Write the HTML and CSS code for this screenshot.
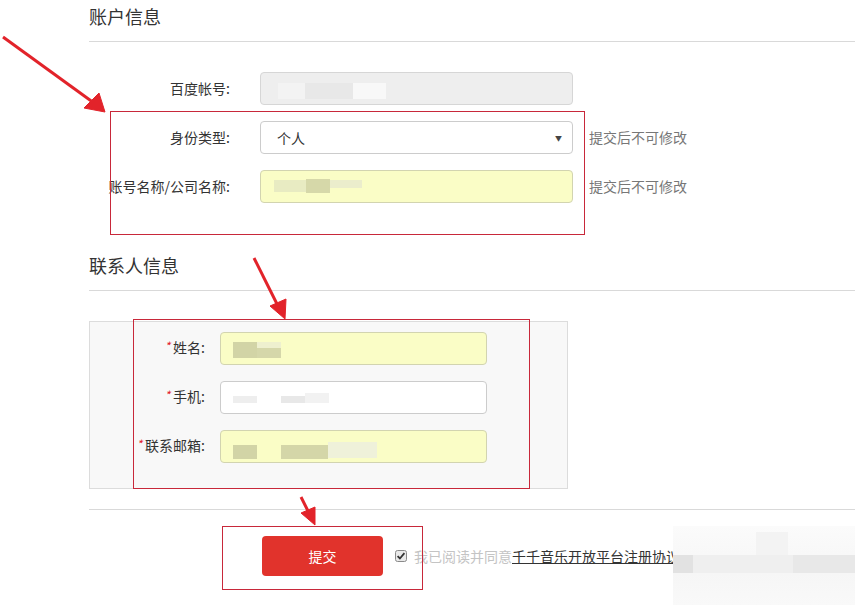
FILE: index.html
```html
<!DOCTYPE html>
<html lang="zh-CN">
<head>
<meta charset="utf-8">
<title>账户信息</title>
<link rel="stylesheet" href="styles.css">
</head>
<body>
<div class="page">
  <section class="sec sec-account">
    <h2 class="sec-title">账户信息</h2>
    <div class="form">
      <div class="row">
        <span class="lbl">百度帐号:</span>
        <div class="field field-disabled">
          <span class="mz mz-a1"></span><span class="mz mz-a2"></span><span class="mz mz-a3"></span>
        </div>
      </div>
      <div class="row">
        <span class="lbl">身份类型:</span>
        <div class="field field-select"><span class="sel-text">个人</span><span class="sel-arrow">▼</span></div>
        <span class="hint">提交后不可修改</span>
      </div>
      <div class="row">
        <span class="lbl">账号名称/公司名称:</span>
        <div class="field field-auto">
          <span class="mz mz-b1"></span><span class="mz mz-b2"></span><span class="mz mz-b3"></span>
        </div>
        <span class="hint">提交后不可修改</span>
      </div>
    </div>
  </section>

  <section class="sec sec-contact">
    <h2 class="sec-title">联系人信息</h2>
    <div class="panel">
      <div class="prow">
        <span class="plbl"><i class="req">*</i>姓名:</span>
        <div class="field pfield field-auto">
          <span class="mz mz-c1"></span><span class="mz mz-c2"></span><span class="mz mz-c3"></span>
        </div>
      </div>
      <div class="prow">
        <span class="plbl"><i class="req">*</i>手机:</span>
        <div class="field pfield">
          <span class="mz mz-d1"></span><span class="mz mz-d2"></span><span class="mz mz-d3"></span>
        </div>
      </div>
      <div class="prow">
        <span class="plbl"><i class="req">*</i>联系邮箱:</span>
        <div class="field pfield field-auto">
          <span class="mz mz-e1"></span><span class="mz mz-e2"></span><span class="mz mz-e3"></span>
        </div>
      </div>
    </div>
  </section>

  <div class="divider"></div>

  <div class="submit-row">
    <button class="btn-submit">提交</button>
    <span class="check">
      <svg width="12" height="12" viewBox="0 0 12 12"><rect x="0.5" y="0.5" width="11" height="11" rx="2" fill="#e9e9e9" stroke="#8a8a8a"/><path d="M2.6 6.2 L4.9 8.5 L9.4 3.2" fill="none" stroke="#333" stroke-width="1.8"/></svg>
    </span>
    <span class="agree">我已阅读并同意</span><a class="agree-link">千千音乐开放平台注册协议</a>
  </div>
</div>

<div class="blur-mask">
  <span class="bm bm1"></span><span class="bm bm2"></span><span class="bm bm3"></span><span class="bm bm4"></span>
</div>

<div class="anno anno-1"></div>
<div class="anno anno-2"></div>
<div class="anno anno-3"></div>

<svg class="arrows" width="855" height="605" viewBox="0 0 855 605">
  <g fill="#e2232a" stroke="#e2232a" stroke-linejoin="round">
    <line x1="3" y1="37" x2="94" y2="103" stroke-width="3"/>
    <polygon points="105,112 84,108 99,93" stroke-width="1"/>
    <line x1="254" y1="258" x2="278" y2="306" stroke-width="3"/>
    <polygon points="285,319 270,306 286,299" stroke-width="1"/>
    <line x1="301" y1="497" x2="309" y2="513" stroke-width="3"/>
    <polygon points="315,525 301,513 315,507" stroke-width="1"/>
  </g>
</svg>
</body>
</html>
```

FILE: styles.css
```css
html, body {
  margin: 0;
  padding: 0;
  background: #fff;
}
body {
  width: 855px;
  height: 605px;
  overflow: hidden;
  position: relative;
  font-family: "Noto Sans CJK SC", "Liberation Sans", sans-serif;
  font-size: 14px;
  color: #333;
}
.page {
  padding-left: 89px;
}
.sec-title {
  margin: 0;
  padding: 4px 0 13px;
  font-size: 18px;
  line-height: 24px;
  font-weight: normal;
  color: #333;
  border-bottom: 1px solid #d9d9d9;
}
.sec-account .form {
  margin-top: 30px;
  display: flex;
  flex-direction: column;
  gap: 16px;
}
.sec-contact {
  margin-top: 46px;
}
.row {
  display: flex;
  align-items: center;
  height: 33px;
}
.lbl {
  width: 141px;
  margin-right: 30px;
  text-align: right;
  white-space: nowrap;
  color: #333;
  line-height: 20px;
  padding-bottom: 2px;
}
.field {
  position: relative;
  box-sizing: border-box;
  width: 313px;
  height: 33px;
  border: 1px solid #ccc;
  border-radius: 4px;
  background: #fff;
}
.field-disabled {
  background: #eee;
  border-color: #d6d6d6;
}
.field-auto {
  background: #fafdc6;
  border-color: #d2d4b0;
}
.field-select {
  display: flex;
  align-items: center;
  justify-content: space-between;
  padding: 0 10px 0 16px;
}
.sel-text {
  color: #333;
}
.sel-arrow {
  font-size: 7px;
  color: #444;
}
.hint {
  margin-left: 16px;
  color: #777;
  font-size: 14px;
  line-height: 20px;
  padding-bottom: 2px;
}
.mz {
  position: absolute;
  display: block;
}
.mz-a1 { left: 17px; top: 10px; width: 27px; height: 16px; background: #f3f3f3; }
.mz-a2 { left: 44px; top: 10px; width: 48px; height: 16px; background: #e8e8e8; }
.mz-a3 { left: 92px; top: 10px; width: 33px; height: 16px; background: #f8f8f8; }
.mz-b1 { left: 13px; top: 9px; width: 32px; height: 12px; background: #e8ebc2; }
.mz-b2 { left: 45px; top: 8px; width: 24px; height: 14px; background: #d6d8a9; }
.mz-b3 { left: 69px; top: 9px; width: 32px; height: 8px; background: #ebedcc; }
.panel {
  margin-top: 30px;
  box-sizing: border-box;
  width: 479px;
  padding: 10px 0 25px;
  background: #f8f8f8;
  border: 1px solid #dcdcdc;
  display: flex;
  flex-direction: column;
  gap: 16px;
}
.prow {
  display: flex;
  align-items: center;
  height: 33px;
}
.plbl {
  width: 115px;
  margin-right: 15px;
  text-align: right;
  white-space: nowrap;
  color: #333;
  line-height: 20px;
  padding-bottom: 2px;
}
.req {
  font-style: italic;
  color: #e2232a;
  font-size: 12px;
  margin-right: 3px;
  position: relative;
  top: -2px;
}
.pfield {
  width: 267px;
}
.mz-c1 { left: 12px; top: 9px; width: 24px; height: 16px; background: #d2d4a6; }
.mz-c2 { left: 36px; top: 15px; width: 24px; height: 10px; background: #d5d7aa; }
.mz-c3 { left: 36px; top: 9px; width: 24px; height: 6px; background: #eef0cf; }
.mz-d1 { left: 12px; top: 14px; width: 24px; height: 7px; background: #eeeeee; }
.mz-d2 { left: 60px; top: 14px; width: 24px; height: 7px; background: #e8e8e8; }
.mz-d3 { left: 84px; top: 11px; width: 24px; height: 10px; background: #f2f2f2; }
.mz-e1 { left: 12px; top: 14px; width: 24px; height: 14px; background: #d2d4a6; }
.mz-e2 { left: 60px; top: 14px; width: 47px; height: 14px; background: #d4d6a8; }
.mz-e3 { left: 107px; top: 11px; width: 49px; height: 16px; background: #eff1da; }
.divider {
  margin-top: 20px;
  border-top: 1px solid #d9d9d9;
}
.submit-row {
  margin-top: 26px;
  padding-left: 173px;
  display: flex;
  align-items: center;
}
.btn-submit {
  width: 121px;
  height: 40px;
  border: none;
  border-radius: 4px;
  background: #e1332c;
  color: #fff;
  font-family: "Noto Sans CJK SC", "Liberation Sans", sans-serif;
  font-size: 14px;
  padding: 0;
}
.check {
  display: flex;
  margin-left: 12px;
}
.agree {
  margin-left: 7px;
  color: #c4c4c4;
}
.agree-link {
  color: #333;
  text-decoration: underline;
}
.blur-mask {
  position: absolute;
  left: 673px;
  top: 526px;
  width: 182px;
  height: 79px;
  background: linear-gradient(180deg, #fbfbfb 0%, #f6f6f6 60%, #f9f9f9 100%);
}
.bm {
  position: absolute;
  display: block;
}
.bm1 { left: 0; top: 29px; width: 20px; height: 18px; background: #e2e2e2; }
.bm2 { left: 20px; top: 29px; width: 100px; height: 18px; background: #efefef; }
.bm3 { left: 120px; top: 29px; width: 62px; height: 18px; background: #e8e8e8; }
.bm4 { left: 83px; top: 6px; width: 32px; height: 23px; background: #f3f3f3; }
.anno {
  position: absolute;
  border: 1px solid #c8283a;
  box-sizing: border-box;
  pointer-events: none;
}
.anno-1 { left: 110px; top: 111px; width: 475px; height: 124px; }
.anno-2 { left: 133px; top: 319px; width: 397px; height: 170px; }
.anno-3 { left: 222px; top: 526px; width: 201px; height: 64px; }
.arrows {
  position: absolute;
  left: 0;
  top: 0;
  pointer-events: none;
}
```
